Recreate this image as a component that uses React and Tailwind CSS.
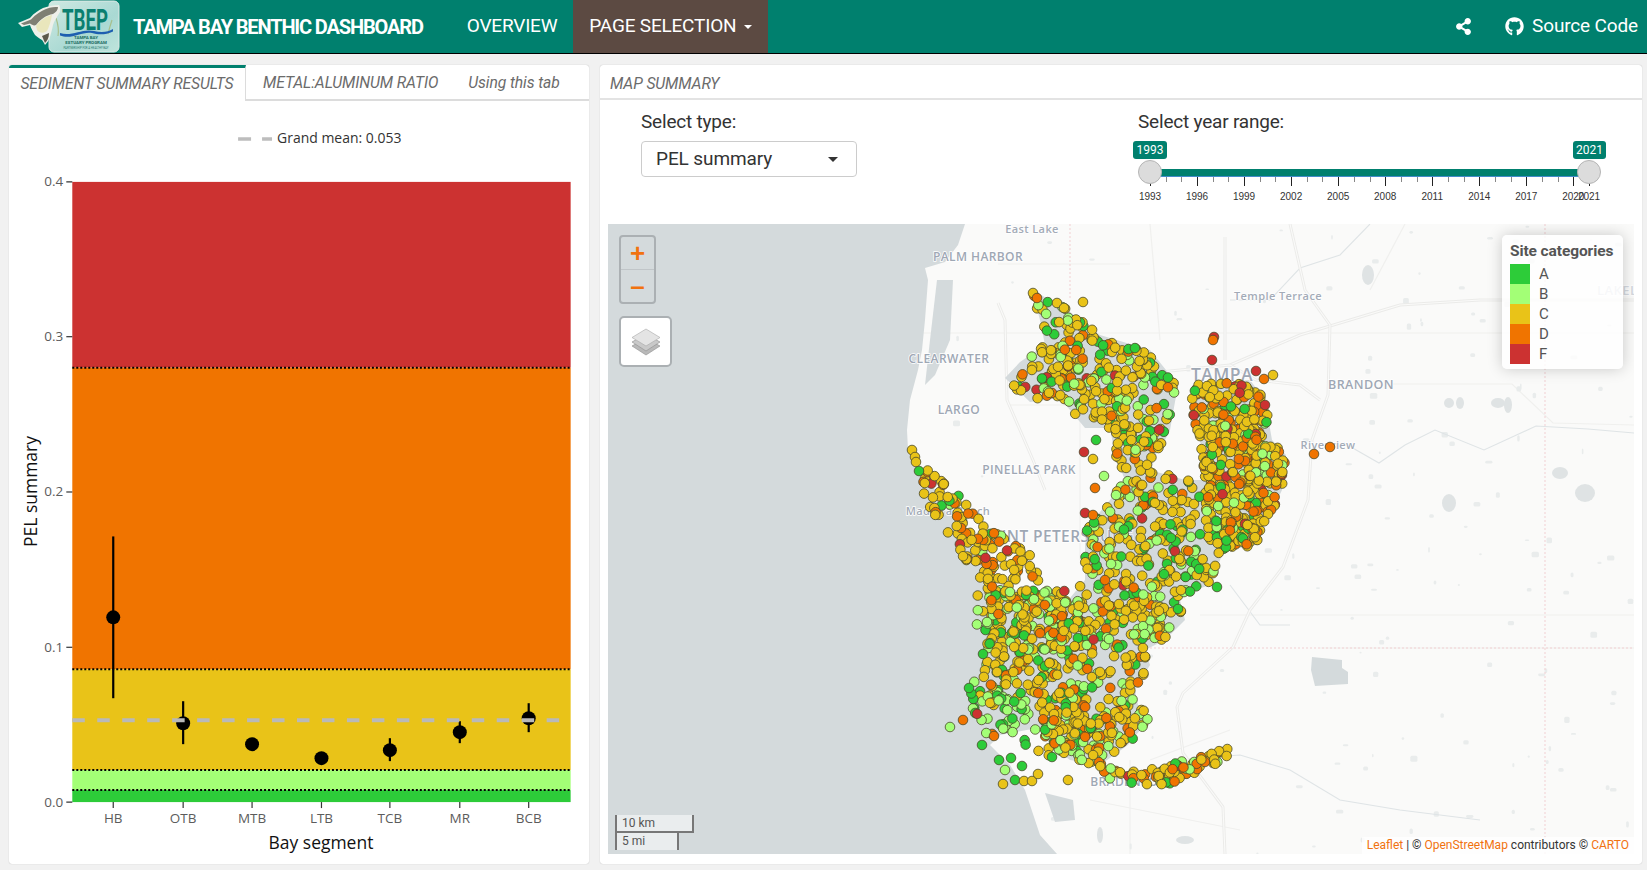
import React from "react";
import { FaGithub, FaShareAlt } from "react-icons/fa";

// seeded random so the dots stay put between renders
let seed = 20211;
const rnd = () => {
  seed |= 0;
  seed = (seed + 0x6d2b79f5) | 0;
  let t = Math.imul(seed ^ (seed >>> 15), 1 | seed);
  t = (t + Math.imul(t ^ (t >>> 7), 61 | t)) ^ t;
  return ((t ^ (t >>> 14)) >>> 0) / 4294967296;
};

const COLORS = { A: "#2dcc39", B: "#a3ff76", C: "#e9c318", D: "#f07400", F: "#cc3231" };

const inside = (p, x, y) => {
  let hit = false;
  for (let i = 0, j = p.length - 1; i < p.length; j = i++) {
    const [xi, yi] = p[i];
    const [xj, yj] = p[j];
    if (yi > y !== yj > y && x < ((xj - xi) * (y - yi)) / (yj - yi) + xi) hit = !hit;
  }
  return hit;
};

// where the sites fall: polygon, number of dots, weights for A B C D F
const REGIONS = [
  { n: 120, w: [6, 6, 62, 20, 6], p: [[915, 470], [932, 470], [955, 490], [980, 520], [1040, 560], [1040, 582], [990, 592], [968, 565], [945, 530], [925, 500]] },
  { n: 300, w: [17, 13, 58, 10, 2], p: [[1032, 290], [1065, 308], [1100, 335], [1150, 350], [1178, 385], [1170, 430], [1160, 450], [1115, 455], [1110, 428], [1085, 428], [1060, 398], [1030, 402], [1005, 378], [1020, 362], [1045, 345], [1040, 320]] },
  { n: 420, w: [7, 11, 60, 18, 4], p: [[1192, 385], [1250, 380], [1265, 400], [1272, 440], [1286, 455], [1282, 490], [1265, 525], [1258, 545], [1225, 548], [1205, 525], [1205, 480], [1200, 440], [1190, 420]] },
  { n: 340, w: [15, 15, 62, 6, 2], p: [[1115, 455], [1160, 445], [1150, 470], [1185, 480], [1205, 480], [1215, 500], [1255, 530], [1250, 548], [1225, 548], [1210, 585], [1180, 595], [1165, 640], [1040, 640], [1060, 610], [1085, 580], [1085, 530], [1110, 500], [1125, 480]] },
  { n: 300, w: [13, 24, 56, 6, 1], p: [[978, 590], [1040, 590], [1060, 600], [1180, 600], [1185, 620], [1165, 640], [1145, 650], [1150, 665], [1135, 690], [1140, 715], [1100, 722], [1060, 725], [1010, 705], [985, 705], [975, 640]] },
  { n: 110, w: [10, 16, 62, 11, 1], p: [[985, 590], [1065, 590], [1065, 640], [1025, 665], [985, 650]] },
  { n: 130, w: [7, 22, 55, 15, 1], p: [[1040, 725], [1062, 705], [1140, 705], [1150, 718], [1128, 745], [1100, 765], [1070, 760], [1050, 745]] },
  { n: 90, w: [6, 12, 50, 30, 2], p: [[1100, 762], [1125, 772], [1170, 766], [1205, 748], [1228, 748], [1226, 760], [1200, 770], [1180, 780], [1172, 788], [1125, 782], [1100, 776]] },
  { n: 55, w: [36, 34, 22, 7, 1], p: [[968, 680], [1010, 690], [1060, 725], [1050, 758], [1010, 750], [975, 725]] },
];

const pick = (w) => {
  const total = w.reduce((a, b) => a + b, 0);
  let r = rnd() * total;
  for (let i = 0; i < 5; i++) {
    r -= w[i];
    if (r <= 0) return "ABCDF"[i];
  }
  return "C";
};

const scatter = () => {
  const out = [];
  REGIONS.forEach(({ n, w, p }) => {
    const xs = p.map((q) => q[0]);
    const ys = p.map((q) => q[1]);
    let left = n;
    while (left > 0) {
      const x = Math.min(...xs) + rnd() * (Math.max(...xs) - Math.min(...xs));
      const y = Math.min(...ys) + rnd() * (Math.max(...ys) - Math.min(...ys));
      if (inside(p, x, y)) {
        out.push([x, y, pick(w)]);
        left--;
      }
    }
  });
  for (let i = out.length - 1; i > 0; i--) {
    const j = Math.floor(rnd() * (i + 1));
    [out[i], out[j]] = [out[j], out[i]];
  }
  return out;
};

// outliers read off the picture
const OUTLIERS = [
  [1330, 447, "D"], [1314, 454, "D"], [1214, 337, "F"], [1213, 340, "D"], [1212, 360, "F"], [1265, 405, "F"],
  [1256, 371, "F"], [1273, 375, "C"], [1264, 379, "D"], [1033, 293, "C"], [1037, 298, "D"], [1083, 302, "C"],
  [1057, 303, "C"], [1064, 308, "C"], [912, 450, "C"], [915, 457, "C"], [916, 462, "C"], [919, 471, "A"],
  [950, 727, "B"], [963, 720, "D"], [994, 736, "D"], [982, 745, "A"], [999, 760, "A"], [1011, 758, "A"],
  [1005, 770, "B"], [1022, 766, "A"], [1015, 780, "A"], [1003, 784, "C"], [1024, 781, "C"], [1032, 781, "C"],
  [1038, 774, "C"], [1068, 780, "C"], [1052, 757, "A"], [1217, 587, "A"], [969, 688, "A"], [987, 622, "B"],
  [983, 654, "A"], [1084, 452, "F"], [1093, 459, "C"], [1095, 488, "D"], [1085, 513, "F"], [1093, 515, "D"],
  [1104, 476, "B"], [1096, 440, "A"],
];

const DOTS = [...scatter(), ...OUTLIERS];

// small ponds and fields on the land
const SPECKS = Array.from({ length: 170 }, () => {
  const east = rnd() < 0.7;
  return [
    east ? 1290 + rnd() * 344 : 940 + rnd() * 350,
    224 + rnd() * 630,
    1.5 + rnd() * 6,
    1.5 + rnd() * 5,
  ];
});

const WATER = [
  [[608, 224], [965, 224], [958, 245], [945, 262], [925, 268], [928, 280], [925, 320], [922, 350], [918, 370], [910, 400], [907, 430], [908, 450], [920, 473], [945, 500], [965, 525], [980, 555], [985, 580], [1000, 595], [1060, 600], [1100, 640], [1130, 700], [1080, 720], [1000, 735], [990, 745], [1010, 765], [1025, 790], [1040, 835], [1057, 854], [608, 854]],
  [[937, 280], [953, 280], [950, 340], [935, 375], [925, 385], [930, 340]],
  [[1045, 793], [1073, 800], [1075, 820], [1055, 822]],
  [[1312, 657], [1342, 660], [1342, 668], [1348, 672], [1348, 684], [1315, 686], [1311, 670]],
  ...REGIONS.slice(1, 7).map((r) => r.p),
];

const HIGHWAYS = [
  "M1230 365 L1300 335 L1400 305 L1480 300 L1634 300",
  "M1290 224 L1305 290 L1330 325 L1328 395 L1312 440 L1308 500 L1283 567 L1250 610 L1233 647 L1183 693 L1177 707 L1183 753 L1223 807 L1225 854",
  "M998 303 L1005 320 L1007 400 L1033 460 L1045 490",
  "M1225 237 L1225 360",
  "M1130 375 L1230 365 L1256 380 L1300 385 L1320 400",
];

const ROADS = [
  "M608 333 L1634 333",
  "M1392 384 L1512 384 L1553 423 L1634 425",
  "M998 264 L1130 264",
  "M1010 405 L1080 405",
  "M1080 400 L1080 560",
  "M1150 224 L1160 340",
  "M1320 648 L1634 648",
  "M1200 615 L1634 615",
  "M1150 760 L1230 730",
  "M1090 800 L1240 830",
  "M1405 224 L1370 290",
  "M1130 854 L1130 760",
];

const RIVERS = [
  "M1344 443 L1379 463 L1405 445 L1435 430 L1484 450 L1536 426 L1588 429 L1634 433",
  "M1230 300 L1270 300 L1300 268 L1340 255 L1370 224",
  "M1175 760 L1240 755 L1290 770 L1340 800 L1400 810 L1480 820",
  "M1230 585 L1245 605 L1260 625 L1290 625",
];

const LAKES = [
  [1368, 275, 6, 10], [1560, 473, 8, 6], [1585, 493, 10, 9], [1449, 503, 7, 9], [1498, 403, 7, 5],
  [1508, 405, 4, 8], [1449, 403, 5, 5], [1460, 403, 4, 6], [1185, 840, 9, 4], [1100, 835, 3, 8],
];

const LABELS = [
  ["East Lake", 1032, 233, 11, "#a3abb7", 600],
  ["PALM HARBOR", 978, 261, 12, "#9ea7b4", 600],
  ["CLEARWATER", 949, 363, 12, "#9ea7b4", 600],
  ["LARGO", 959, 414, 12, "#9ea7b4", 600],
  ["PINELLAS PARK", 1029, 474, 12, "#9ea7b4", 600],
  ["Madeira Beach", 948, 515, 11, "#a3abb7", 600],
  ["SAINT PETERSBURG", 1058, 542, 15.5, "#9ea7b4", 600],
  ["Temple Terrace", 1278, 300, 11, "#a3abb7", 600],
  ["TAMPA", 1222, 381, 17.5, "#9ea7b4", 600],
  ["BRANDON", 1361, 389, 12.5, "#9ea7b4", 600],
  ["Riverview", 1328, 449, 11, "#a3abb7", 600],
  ["LAKELAND", 1632, 295, 13, "#d5d9df", 600],
  ["BRADENTON", 1129, 786, 12, "#9ea7b4", 600],
];

const TickMark = ({ x, major }) => (
  <div className="absolute top-0" style={{ left: x }}>
    <div className={major ? "h-[9px] w-px bg-[#222]" : "h-[5px] w-px bg-[#888]"} />
  </div>
);

const YearRange = () => {
  const start = 12;
  const span = 439;
  const years = Array.from({ length: 29 }, (_, i) => i);
  const labels = [1993, 1996, 1999, 2002, 2005, 2008, 2011, 2014, 2017, 2020, 2021];
  return (
    <div className="w-[470px] font-[Roboto,sans-serif]">
      <div className="text-[19px] leading-[24px] tracking-[-0.2px] text-[#333]">Select year range:</div>
      <div className="relative mt-[7px] h-[60px] w-[470px]">
        <div className="absolute top-0 left-[-5px] h-[18px] w-[34px] rounded-[3px] bg-[#00806e] text-center text-[12px] leading-[18px] text-white">1993</div>
        <div className="absolute top-0 left-[435px] h-[18px] w-[33px] rounded-[3px] bg-[#00806e] text-center text-[12px] leading-[18px] text-white">2021</div>
        <div className="absolute top-[28px] left-[12px] h-[8px] w-[439px] border-b border-[#428bca] bg-[#00806e]" />
        <div className="absolute top-[36px] left-0 h-[10px] w-full">
          {years.map((i) => (
            <TickMark key={i} x={start + (i * span) / 28} major={i % 3 === 0 || i === 28} />
          ))}
        </div>
        {labels.map((y) => (
          <div
            key={y}
            className="absolute top-[50px] w-[30px] -translate-x-1/2 text-center font-['Liberation_Sans',sans-serif] text-[10px] leading-[12px] text-[#333]"
            style={{ left: start + ((y - 1993) * span) / 28 }}
          >
            {y}
          </div>
        ))}
        <div className="absolute top-[19px] left-0 h-[24px] w-[24px] rounded-full border border-[#b5b5b5] bg-[#dcdcdc]" />
        <div className="absolute top-[19px] left-[439px] h-[24px] w-[24px] rounded-full border border-[#b5b5b5] bg-[#dcdcdc]" />
      </div>
    </div>
  );
};

const Logo = () => (
  <svg width="108" height="53" viewBox="0 0 108 53" className="shrink-0">
    <defs>
      <linearGradient id="logoBg" x1="0" y1="0" x2="1" y2="1">
        <stop offset="0" stopColor="#cfe9e2" />
        <stop offset="0.6" stopColor="#a9d9d3" />
        <stop offset="1" stopColor="#bfe4dc" />
      </linearGradient>
    </defs>
    <rect x="33" y="1" width="70" height="51" rx="5" fill="url(#logoBg)" stroke="#dfe9e6" strokeWidth="1" />
    <path d="M40 18 C42 24 43 30 42 36 M96 20 C94 26 93 30 92 34" fill="none" stroke="#a8bf8c" strokeWidth="1.2" />
    <text x="69" y="30" textAnchor="middle" fontFamily="Roboto, sans-serif" fontWeight="700" fontSize="30" fill="#0b7f70" textLength="46" lengthAdjust="spacingAndGlyphs">TBEP</text>
    <path d="M44 33 C56 37 66 28 78 31 C86 33 92 32 97 29 L97 31.5 C90 35 82 35 76 33 C66 31 56 40 44 35.5 Z" fill="#1e5fb0" />
    <text x="70" y="39" textAnchor="middle" fontFamily="Roboto, sans-serif" fontWeight="700" fontSize="4.4" fill="#176a60">TAMPA BAY</text>
    <text x="70" y="44" textAnchor="middle" fontFamily="Roboto, sans-serif" fontWeight="700" fontSize="4.4" fill="#176a60">ESTUARY PROGRAM</text>
    <text x="70" y="48.5" textAnchor="middle" fontFamily="Roboto, sans-serif" fontSize="2.8" fill="#2a7b70">PARTNERSHIP FOR A HEALTHY BAY</text>
    {/* tarpon */}
    <path d="M2 23 L14 18 C18 13 23 10 27 8 C33 6 38 5 43 5 C45 8 44 11 44 12 C41 17 38 21 37 25 C36 30 35 33 34 37 C33 40 31 43 29 45 C28 43 27 41 26 40 C23 38 21 37 19 35 C17 32 15 28 14 25 L6 27 Z" fill="#eef0ea" />
    <path d="M5 23.5 L15 19.5 C20 14 25 11 30 9 C35 7 39 7 42 7 C42 10 40 12 37 14 C30 15 24 20 20 25 C18 26 16 25 14 23.5 L8 25 Z" fill="#7f7f74" />
    <path d="M20 26 C24 20 31 16 36 15 C35 21 33 27 31 31 C27 34 23 33 21 30 Z" fill="#e9e6bc" />
    <path d="M26 36 L33 33 C33 38 31 41 29 43 Z" fill="#5d5a4c" />
  </svg>
);

const Navbar = () => (
  <nav className="flex h-[54px] items-stretch border-b border-black bg-[#00806e] font-[Roboto,sans-serif] text-white">
    <div className="ml-[16px] flex items-center"><Logo /></div>
    <div className="ml-[9px] flex items-center text-[20px] font-bold tracking-[-1.15px]">TAMPA BAY BENTHIC DASHBOARD</div>
    <div className="ml-[44px] flex items-center text-[19px] tracking-[-0.2px]">OVERVIEW</div>
    <div className="ml-[16px] flex w-[195px] items-center bg-[#5c4a42] pl-[16px] text-[19px] tracking-[-0.2px]">
      PAGE SELECTION
      <span className="ml-[8px] h-0 w-0 border-x-[4px] border-t-[4px] border-x-transparent border-t-white" />
    </div>
    <div className="flex-1" />
    <div className="flex items-center pr-[33px]"><FaShareAlt size={17} /></div>
    <div className="flex items-center gap-[8px] pr-[9px] text-[19px] tracking-[-0.15px]">
      <FaGithub size={19} />
      Source Code
    </div>
  </nav>
);

const CATS = [
  ["HB", 113, 617, 536, 698],
  ["OTB", 183, 723, 701, 744],
  ["MTB", 252, 744],
  ["LTB", 321.5, 758],
  ["TCB", 390, 750, 738, 761],
  ["MR", 460, 732, 721, 743],
  ["BCB", 529, 718, 703, 732],
];

const BANDS = [
  [181, 367, COLORS.F],
  [367, 669, COLORS.D],
  [669, 770, COLORS.C],
  [770, 790, COLORS.B],
  [790, 802, COLORS.A],
];

// svg uses page coordinates so numbers can be read straight off the picture
const SummaryPlot = () => (
  <svg viewBox="9 100 580 764" className="block h-[763px] w-full" fontFamily="'Open Sans', sans-serif">
    <line x1="238" x2="251" y1="138" y2="138" stroke="#bdbdbd" strokeWidth="3.5" />
    <line x1="262" x2="272" y1="138" y2="138" stroke="#bdbdbd" strokeWidth="3.5" />
    <text x="277" y="142.5" fontSize="14" fill="#333">Grand mean: 0.053</text>
    {BANDS.map(([a, b, c]) => (
      <rect key={c} x="72" y={a} width="499" height={b - a} fill={c} />
    ))}
    {[367, 669, 770, 790].map((y) => (
      <line key={y} x1="72" x2="571" y1={y} y2={y} stroke="#000" strokeWidth="2" strokeDasharray="2 2" />
    ))}
    {CATS.map(([name, x, cy, lo, hi]) => (
      <g key={name}>
        {lo && <line x1={x} x2={x} y1={lo} y2={hi} stroke="#000" strokeWidth="2.2" />}
        <circle cx={x} cy={cy} r="7" fill="#000" />
        <line x1={x} x2={x} y1="802" y2="808" stroke="#333" strokeWidth="1.2" />
        <text x={x} y="823" textAnchor="middle" fontSize="13.5" fill="#5c5c5c">{name}</text>
      </g>
    ))}
    <line x1="72" x2="571" y1="720" y2="720" stroke="#b9b9b9" strokeWidth="4" strokeDasharray="12.5 12.5" />
    {[[0.4, 181], [0.3, 336], [0.2, 491.5], [0.1, 647], [0.0, 802]].map(([v, y]) => (
      <g key={v}>
        <line x1="66" x2="72" y1={y} y2={y} stroke="#333" strokeWidth="1.2" />
        <text x="63" y={y + 4.5} textAnchor="end" fontSize="13.5" fill="#5c5c5c">{v.toFixed(1)}</text>
      </g>
    ))}
    <text x="321" y="849" textAnchor="middle" fontSize="17.5" fill="#111">Bay segment</text>
    <text transform="translate(37 491) rotate(-90)" textAnchor="middle" fontSize="17.5" fill="#111">PEL summary</text>
  </svg>
);

const MapDrawing = () => (
  <svg viewBox="608 224 1026 630" className="absolute inset-0 h-full w-full" fontFamily="'Open Sans', sans-serif">
    <rect x="608" y="224" width="1026" height="630" fill="#fafaf9" />
    {ROADS.map((d) => (
      <path key={d} d={d} fill="none" stroke="#f0f0ee" strokeWidth="1.2" />
    ))}
    {SPECKS.map(([x, y, w, h]) => (
      <rect key={`${x}-${y}`} x={x} y={y} width={w} height={h} rx="1.5" fill="#e9ecec" />
    ))}
    {LAKES.map(([x, y, rx, ry]) => (
      <ellipse key={`${x}-${y}`} cx={x} cy={y} rx={rx} ry={ry} fill="#dfe3e4" />
    ))}
    {RIVERS.map((d) => (
      <path key={d} d={d} fill="none" stroke="#dfe4e6" strokeWidth="1.1" />
    ))}
    {HIGHWAYS.map((d) => (
      <g key={d}>
        <path d={d} fill="none" stroke="#ebebe9" strokeWidth="3" strokeLinejoin="round" />
        <path d={d} fill="none" stroke="#fafaf9" strokeWidth="1.1" strokeLinejoin="round" />
      </g>
    ))}
    {WATER.map((p, i) => (
      <polygon key={i} points={p.map((q) => q.join(",")).join(" ")} fill="#d4dadc" />
    ))}
    <path d="M1070 224 L1070 300 M1545 224 L1545 854 M1150 648 L1634 648" fill="none" stroke="#f1cfd2" strokeWidth="1" strokeDasharray="2 2" />
    {LABELS.map(([t, x, y, size, fill, weight]) => (
      <text key={t} x={x} y={y} textAnchor="middle" fontSize={size} fontWeight={weight} fill={fill} stroke="#fff" strokeWidth="1.5" paintOrder="stroke" letterSpacing="0.4">{t}</text>
    ))}
    {DOTS.map(([x, y, c], i) => (
      <circle key={i} cx={x} cy={y} r="4.8" fill={COLORS[c]} stroke="#4a4a2a" strokeOpacity="0.8" strokeWidth="1" />
    ))}
  </svg>
);

const MapLegend = () => (
  <div className="absolute top-[11px] right-[11px] h-[134px] w-[121px] rounded-[5px] bg-white/80 px-[8px] pt-[5px] font-[Roboto,sans-serif] shadow-[0_0_15px_rgba(0,0,0,0.2)]">
    <div className="text-[15.5px] leading-[22px] font-bold tracking-[-0.1px] whitespace-nowrap text-[#555]">Site categories</div>
    <div className="mt-[2px] flex flex-col">
      {Object.entries(COLORS).map(([k, c]) => (
        <div key={k} className="flex h-[20px] items-center">
          <span className="h-[20px] w-[20px]" style={{ background: c }} />
          <span className="ml-[9px] text-[15px] text-[#555]">{k}</span>
        </div>
      ))}
    </div>
  </div>
);

const MapControls = () => (
  <div className="absolute top-[11px] left-[11px] flex flex-col gap-[12px]">
    <div className="flex h-[69px] w-[37px] flex-col rounded-[4px] border-2 border-[#abb0b3] text-[#f1720f]">
      <div className="flex h-[33px] items-center justify-center border-b border-[#c0c5c8] font-['Liberation_Sans',sans-serif] text-[26px] leading-none font-bold">+</div>
      <div className="flex flex-1 items-center justify-center font-['Liberation_Sans',sans-serif] text-[26px] leading-none font-bold">–</div>
    </div>
    <div className="flex h-[51px] w-[53px] items-center justify-center rounded-[5px] border-2 border-[#abb0b3] bg-white">
      <svg width="30" height="30" viewBox="0 0 30 30">
        <path d="M1 19 L15 11 L29 19 L15 28 Z" fill="#b9b9b9" stroke="#8f8f8f" strokeWidth="0.6" />
        <path d="M1 15 L15 7 L29 15 L15 24 Z" fill="#c9c9c9" stroke="#8f8f8f" strokeWidth="0.6" />
        <path d="M1 10.5 L15 2 L29 10.5 L15 19 Z" fill="#e4e4e4" stroke="#a8a8a8" strokeWidth="0.6" />
      </svg>
    </div>
  </div>
);

const MapScale = () => (
  <div className="absolute bottom-[4px] left-[7px] font-[Roboto,sans-serif] text-[12px] leading-[16px] text-[#555]">
    <div className="h-[18px] w-[79px] border-x-2 border-b-2 border-[#777] bg-white/50 pl-[5px]">10 km</div>
    <div className="h-[17px] w-[64px] border-x-2 border-[#777] bg-white/50 pl-[5px]">5 mi</div>
  </div>
);

const Attribution = () => (
  <div className="absolute right-0 bottom-0 h-[17px] bg-white/80 px-[5px] font-[Roboto,sans-serif] text-[12px] leading-[17px] text-[#333]">
    <span className="text-[#f1720f]">Leaflet</span> | © <span className="text-[#f1720f]">OpenStreetMap</span> contributors © <span className="text-[#f1720f]">CARTO</span>
  </div>
);

const App = () => (
  <div className="h-[870px] overflow-hidden bg-[#f1f1f1]">
    <Navbar />
    <div className="flex items-start gap-[11px] pt-[11px] pl-[9px]">
      {/* Left card */}
      <div className="h-[799px] w-[580px] overflow-hidden rounded-[3px] bg-white shadow-[0_0_1px_rgba(0,0,0,0.3)]">
        <div className="flex h-[36px] border-b-2 border-[#dcdcdc] font-[Roboto,sans-serif] text-[15.7px] text-[#6b6b6b] italic">
          <div className="-mb-[2px] flex h-[36px] w-[237px] items-center justify-center border-t-[3px] border-r border-[#00806e] border-r-[#dcdcdc] bg-white pb-[2px] tracking-[-0.1px]">SEDIMENT SUMMARY RESULTS</div>
          <div className="flex items-center pt-[1px] pl-[17px] tracking-[-0.1px]">METAL:ALUMINUM RATIO</div>
          <div className="flex items-center pt-[1px] pl-[30px] tracking-[-0.1px]">Using this tab</div>
        </div>
        <SummaryPlot />
      </div>
      {/* Right card */}
      <div className="h-[799px] w-[1042px] overflow-hidden rounded-[3px] bg-white shadow-[0_0_1px_rgba(0,0,0,0.3)]">
        <div className="flex h-[35px] items-center border-b-2 border-[#e3e3e3] pt-[4px] pl-[10px] font-[Roboto,sans-serif] text-[15.7px] tracking-[-0.1px] text-[#6b6b6b] italic">MAP SUMMARY</div>
        <div className="flex h-[124px] pt-[10px] pl-[41px]">
          <div className="w-[497px] font-[Roboto,sans-serif]">
            <div className="text-[19px] leading-[24px] tracking-[-0.2px] text-[#333]">Select type:</div>
            <div className="mt-[7px] flex h-[36px] w-[216px] items-center justify-between rounded-[4px] border border-[#ccc] pt-[1px] pr-[18px] pl-[14px] text-[19px] tracking-[-0.1px] text-[#333]">
              PEL summary
              <span className="h-0 w-0 border-x-[5px] border-t-[5px] border-x-transparent border-t-[#333]" />
            </div>
          </div>
          <YearRange />
        </div>
        <div className="relative ml-[8px] h-[630px] w-[1026px] overflow-hidden">
          <MapDrawing />
          <MapControls />
          <MapLegend />
          <MapScale />
          <Attribution />
        </div>
      </div>
    </div>
  </div>
);

export default App;
